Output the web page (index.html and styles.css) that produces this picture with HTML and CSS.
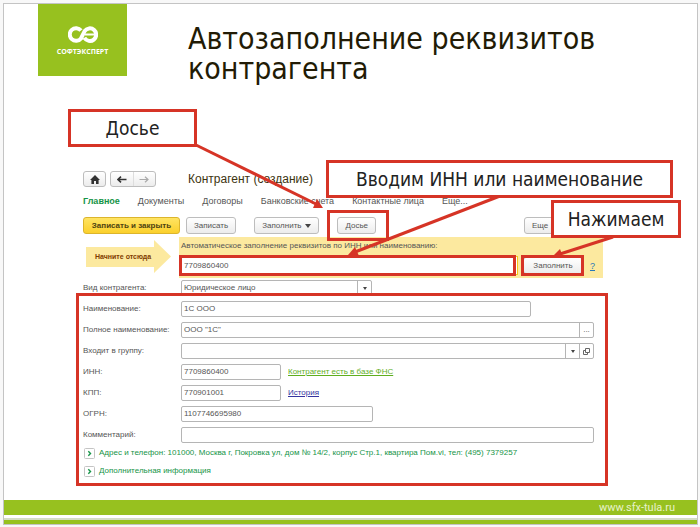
FILE: index.html
```
<!DOCTYPE html>
<html lang="ru">

<head>
    <meta charset="UTF-8">
    <title>Автозаполнение реквизитов контрагента</title>
    <link rel="stylesheet" href="styles.css">
</head>

<body>
    <div class="slide">
        <header class="header">
            <div class="logo">
                <svg class="logo-mark" viewBox="0 0 30 17" fill="none" stroke="#fff" stroke-width="4">
                    <path d="M13 4.6A6.3 6.3 0 1 0 13 12.4L16.6 5.2A6.3 6.3 0 1 1 16.4 11.8" />
                    <path d="M17 8.5H27" stroke-width="2" />
                </svg>
                <span>СОФТЭКСПЕРТ</span>
            </div>
            <h1>Автозаполнение реквизитов контрагента</h1>
        </header>

        <main class="content">
            <form class="form">
                <div class="topbar">
                    <button type="button" class="btn icon-btn" aria-label="Домой">
                        <svg width="10" height="9" viewBox="0 0 10 9" fill="#333"><path d="M5 0L10 5H8.6V9H6V6H4V9H1.4V5H0L5 0Z" /></svg>
                    </button>
                    <div class="history">
                        <button type="button" aria-label="Назад">
                            <svg width="10" height="7" viewBox="0 0 10 7" fill="none" stroke="#333" stroke-width="1.6"><path d="M9.5 3.5H1M4 .7L1 3.5L4 6.3" /></svg>
                        </button>
                        <button type="button" aria-label="Вперед">
                            <svg width="10" height="7" viewBox="0 0 10 7" fill="none" stroke="#aaa" stroke-width="1.2"><path d="M.5 3.5H9M6 .7L9 3.5L6 6.3" /></svg>
                        </button>
                    </div>
                    <h2>Контрагент (создание)</h2>
                </div>

                <nav class="tabs">
                    <a href="#" class="active">Главное</a>
                    <a href="#">Документы</a>
                    <a href="#">Договоры</a>
                    <a href="#">Банковские счета</a>
                    <a href="#">Контактные лица</a>
                    <a href="#">Еще...</a>
                </nav>

                <div class="toolbar">
                    <button type="button" class="btn primary">Записать и закрыть</button>
                    <button type="button" class="btn">Записать</button>
                    <button type="button" class="btn fill-menu">Заполнить <i class="caret"></i></button>
                    <button type="button" class="btn dossier">Досье</button>
                    <button type="button" class="btn more">Еще</button>
                </div>

                <div class="autofill">
                    <div class="start-cell">
                        <svg class="start-arrow" viewBox="0 0 85 33" fill="#fce99f"><path d="M0 7H68V0L85 16.5L68 33V27H0Z" /></svg>
                        <span>Начните отсюда</span>
                    </div>
                    <div class="autofill-box">
                        <label for="search">Автоматическое заполнение реквизитов по ИНН или наименованию:</label>
                        <div class="autofill-row">
                            <input type="text" id="search" value="7709860400">
                            <button type="button" class="btn">Заполнить</button>
                            <a href="#" class="help">?</a>
                        </div>
                    </div>
                </div>

                <div class="fields">
                    <label for="kind">Вид контрагента:</label>
                    <div class="field w-kind">
                        <select id="kind">
                            <option>Юридическое лицо</option>
                        </select>
                        <span class="addon"><i class="caret small"></i></span>
                    </div>

                    <label for="name">Наименование:</label>
                    <div class="field w-name"><input type="text" id="name" value="1С ООО"></div>

                    <label for="fullname">Полное наименование:</label>
                    <div class="field">
                        <input type="text" id="fullname" value='ООО "1С"'>
                        <button type="button" class="addon">...</button>
                    </div>

                    <label for="group">Входит в группу:</label>
                    <div class="field">
                        <input type="text" id="group">
                        <button type="button" class="addon" aria-label="Выбрать"><i class="caret small"></i></button>
                        <button type="button" class="addon" aria-label="Открыть">
                            <svg width="7" height="7" viewBox="0 0 7 7" fill="none" stroke="#666"><path d="M2.5.5H6.5V4.5H2.5ZM2.5 2.5H.5V6.5H4.5V4.5" /></svg>
                        </button>
                    </div>

                    <label for="inn">ИНН:</label>
                    <div class="line">
                        <div class="field w-code"><input type="text" id="inn" value="7709860400"></div>
                        <a href="#" class="found">Контрагент есть в базе ФНС</a>
                    </div>

                    <label for="kpp">КПП:</label>
                    <div class="line">
                        <div class="field w-code"><input type="text" id="kpp" value="770901001"></div>
                        <a href="#" class="log">История</a>
                    </div>

                    <label for="ogrn">ОГРН:</label>
                    <div class="field w-ogrn"><input type="text" id="ogrn" value="1107746695980"></div>

                    <label for="comment">Комментарий:</label>
                    <div class="field"><input type="text" id="comment"></div>
                </div>

                <div class="sections">
                    <button type="button" class="section">
                        <svg width="11" height="11" viewBox="0 0 11 11" fill="none"><rect x=".5" y=".5" width="10" height="10" rx="1" stroke="#c4c4c4" /><path d="M4.3 3.3L6.5 5.5L4.3 7.7" stroke="#159447" stroke-width="1.4" /></svg>
                        Адрес и телефон: 101000, Москва г, Покровка ул, дом № 14/2, корпус Стр.1, квартира Пом.vi, тел: (495) 7379257
                    </button>
                    <button type="button" class="section">
                        <svg width="11" height="11" viewBox="0 0 11 11" fill="none"><rect x=".5" y=".5" width="10" height="10" rx="1" stroke="#c4c4c4" /><path d="M4.3 3.3L6.5 5.5L4.3 7.7" stroke="#159447" stroke-width="1.4" /></svg>
                        Дополнительная информация
                    </button>
                </div>
            </form>
        </main>

        <footer class="footer">
            <a href="#">www.sfx-tula.ru</a>
        </footer>

        <!-- Callouts over the form -->
        <div class="frame frame-dossier"></div>
        <div class="frame frame-search"></div>
        <div class="frame frame-fill"></div>
        <div class="frame frame-fields"></div>
        <svg class="arrows" width="692" height="300" viewBox="4 4 692 300" stroke="#d63426" fill="#d63426">
            <path d="M196 145L316 204" stroke-width="3" />
            <path d="M323 208L313 208L317 199Z" stroke="none" />
            <path d="M500 196L355 252" stroke-width="3" />
            <path d="M348 255L355 247L359 256Z" stroke="none" />
            <path d="M613 237L560 254" stroke-width="3" />
            <path d="M553 256L560 249L563 257Z" stroke="none" />
        </svg>
        <div class="callout callout-dossier">Досье</div>
        <div class="callout callout-search">Вводим ИНН или наименование</div>
        <div class="callout callout-fill">Нажимаем</div>
    </div>
</body>

</html>
```
FILE: styles.css
```
* {
    box-sizing: border-box;
}

body {
    margin: 0;
    padding: 3px 2px 3px 3px;
    background: #f8f8f8;
    color: #555;
    font-family: "Liberation Sans", Arial, sans-serif;
    font-size: 8px;
    line-height: 12px;
}

.slide {
    position: relative;
    display: flex;
    flex-direction: column;
    min-height: calc(100vh - 6px);
    border: 1px solid #c4c4c4;
    background: #fff;
}

.header {
    display: flex;
    align-items: flex-start;
    gap: 61px;
    min-height: 167px;
    padding: 0 34px;
}

.logo {
    display: flex;
    flex-direction: column;
    align-items: center;
    gap: 4px;
    width: 89px;
    height: 72px;
    padding-top: 22px;
    background: #97c11f;
    color: #fff;
    font-family: "Open Sans", sans-serif;
    font-size: 7px;
    font-weight: 700;
    line-height: 10px;
}

.logo-mark {
    width: 30px;
    height: 17px;
}

h1 {
    flex: 1;
    max-width: 440px;
    margin: 0;
    padding-top: 20px;
    color: #221b05;
    font-family: "DejaVu Sans Condensed", Tahoma, sans-serif;
    font-size: 30px;
    font-weight: 400;
    line-height: 30px;
}

.content {
    flex: 1;
    padding: 0 79px;
}

.form {
    max-width: 520px;
}

button,
input,
select {
    margin: 0;
    color: inherit;
    font: inherit;
}

a {
    color: inherit;
}

.btn {
    display: flex;
    align-items: center;
    justify-content: center;
    gap: 4px;
    height: 17px;
    padding: 0 7px;
    border: 1px solid #bdbdbd;
    border-radius: 3px;
    background: linear-gradient(#fff, #ececec);
    white-space: nowrap;
}

.primary {
    border-color: #dcb52c;
    background: linear-gradient(#ffe463, #fbd02c);
    color: #4d4311;
    font-weight: 700;
}

.caret {
    border: 3px solid transparent;
    border-top: 4px solid #444;
    border-bottom: 0;
}

.caret.small {
    border-width: 3px 2px 0;
}

.topbar {
    display: flex;
    align-items: center;
    height: 16px;
}

.icon-btn {
    width: 23px;
    height: 16px;
    padding: 0;
}

.history {
    display: flex;
    width: 46px;
    height: 16px;
    margin: 0 32px 0 4px;
    border: 1px solid #bdbdbd;
    border-radius: 3px;
    background: linear-gradient(#fff, #ececec);
}

.history button {
    display: flex;
    flex: 1;
    align-items: center;
    justify-content: center;
    padding: 0;
    border: 0;
    background: none;
}

.history button + button {
    border-left: 1px solid #ddd;
}

h2 {
    margin: 0;
    color: #3d3410;
    font-size: 12px;
    font-weight: 400;
    line-height: 16px;
}

.tabs {
    display: flex;
    gap: 18px;
    padding: 8px 0 10px;
    font-size: 9px;
    white-space: nowrap;
}

.tabs a {
    text-decoration: none;
}

.tabs .active {
    color: #159447;
    font-weight: 700;
}

.toolbar {
    display: flex;
    gap: 6px;
}

.toolbar .primary {
    width: 97px;
}

.fill-menu {
    margin-left: 12px;
}

.dossier {
    margin-left: 12px;
}

.toolbar .more {
    justify-content: flex-start;
    width: 79px;
    margin-left: auto;
}

.autofill {
    display: flex;
    margin-top: 3px;
}

.start-cell {
    position: relative;
    width: 96px;
    padding: 14px 0 0 12px;
    color: #803c00;
    font-size: 7px;
    font-weight: 700;
}

.start-cell span {
    position: relative;
}

.start-arrow {
    position: absolute;
    top: 3px;
    left: 3px;
    width: 85px;
    height: 33px;
}

.autofill-box {
    flex: 1;
    height: 41px;
    padding: 3px 8px 0 2px;
    background: #fce99f;
}

.autofill-row {
    display: flex;
    align-items: center;
    gap: 5px;
    margin-top: 4px;
}

.autofill-row input {
    flex: 1;
    min-width: 0;
    height: 19px;
    padding: 0 2px;
    border: 1px solid #f5c518;
}

.autofill-row .btn {
    width: 60px;
}

.help {
    padding-left: 2px;
    color: #2878b8;
    font-size: 9px;
}

.fields {
    display: grid;
    grid-template-columns: 98px 1fr;
    row-gap: 5px;
    align-items: center;
    width: 511px;
    max-width: 100%;
    margin-top: 2px;
}

.field {
    display: flex;
    width: 100%;
    height: 16px;
    border: 1px solid #b5b5b5;
    border-radius: 2px;
    background: #fff;
}

.field input,
.field select {
    flex: 1;
    min-width: 0;
    padding: 0 2px;
    border: 0;
    background: none;
    appearance: none;
}

.w-kind {
    width: 191px;
}

.w-name {
    width: 350px;
}

.w-code {
    width: 100px;
}

.w-ogrn {
    width: 192px;
}

.addon {
    display: flex;
    align-items: center;
    justify-content: center;
    width: 14px;
    padding: 0;
    border: 0;
    border-left: 1px solid #b5b5b5;
    background: none;
}

.line {
    display: flex;
    align-items: center;
    gap: 7px;
}

.found {
    color: #5fae1e;
}

.log {
    color: #3434a0;
}

.sections {
    display: flex;
    flex-direction: column;
    gap: 6px;
    padding: 4px 0 23px 1px;
}

.section {
    display: flex;
    align-items: center;
    gap: 4px;
    padding: 0;
    border: 0;
    background: none;
    color: #159447;
    text-align: left;
}

.footer {
    height: 24px;
    padding-right: 22px;
    border-bottom: 4px solid #97c11f;
    background: linear-gradient(#97c11f 15px, #fff 15px, #fff 18px, #d5dcc5 18px);
    color: #e8f2cc;
    font-family: Roboto, sans-serif;
    font-size: 11px;
    line-height: 15px;
    text-align: right;
}

.footer a {
    text-decoration: none;
}

.frame,
.callout {
    position: absolute;
    border: 3px solid #d63426;
}

.frame {
    pointer-events: none;
}

.frame-dossier {
    top: 206px;
    left: 323px;
    width: 62px;
    height: 31px;
}

.frame-search {
    top: 251px;
    left: 175px;
    width: 337px;
    height: 21px;
}

.frame-fill {
    top: 251px;
    left: 517px;
    width: 63px;
    height: 21px;
}

.frame-fields {
    top: 289px;
    left: 72px;
    width: 532px;
    height: 193px;
}

.arrows {
    position: absolute;
    top: 0;
    left: 0;
    pointer-events: none;
}

.callout {
    height: 38px;
    background: #fff;
    color: #222;
    font-family: "DejaVu Sans Condensed", Tahoma, sans-serif;
    font-size: 19px;
    line-height: 32px;
    text-align: center;
    white-space: nowrap;
}

.callout-dossier {
    top: 105px;
    left: 64px;
    width: 129px;
}

.callout-search {
    top: 156px;
    left: 322px;
    width: 347px;
}

.callout-fill {
    top: 196px;
    left: 547px;
    width: 130px;
}
```
